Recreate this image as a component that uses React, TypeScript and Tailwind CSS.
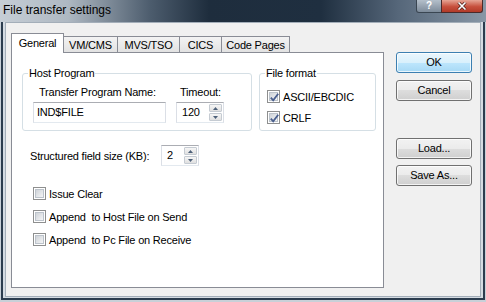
import React from 'react'

const TABS = [
  { label: 'General', w: 'w-[53px]' },
  { label: 'VM/CMS', w: 'w-[55px]' },
  { label: 'MVS/TSO', w: 'w-[63px]' },
  { label: 'CICS', w: 'w-[43px]' },
  { label: 'Code Pages', w: 'w-[69px]' },
]

function CheckBox({ checked }: { checked?: boolean }) {
  return (
    <span className="relative flex h-[13px] w-[13px] shrink-0 items-center justify-center border border-[#8e8f8f] bg-white">
      <span className="h-[9px] w-[9px] border border-[#bcc3cb] bg-[linear-gradient(135deg,#cfd3d8,#f4f5f6)]" />
      {checked && (
        <svg className="absolute left-[1px] top-[1px]" width="11" height="11" viewBox="0 0 11 11">
          <path d="M1.8 5.6 L4.2 8.3 L9.2 1.8" fill="none" stroke="#4a5f8e" strokeWidth="1.8" />
        </svg>
      )}
    </span>
  )
}

function CheckRow({ label, checked, h }: { label: string; checked?: boolean; h: string }) {
  return (
    <div className={`flex ${h} items-center gap-[3px]`}>
      <CheckBox checked={checked} />
      <span className="whitespace-pre leading-[14px]">{label}</span>
    </div>
  )
}

function Arrow({ up }: { up?: boolean }) {
  return (
    <svg width="5" height="3" viewBox="0 0 5 3">
      <path d={up ? 'M0 3 L2.5 0 L5 3 Z' : 'M0 0 L2.5 3 L5 0 Z'} fill="#4d6079" />
    </svg>
  )
}

function Spin({ value, w }: { value: string; w: string }) {
  return (
    <div className={`flex h-[21px] ${w} border border-[#abadb3] border-x-[#dbdfe6] border-b-[#e3e9ef] bg-white`}>
      <span className="flex-1 pl-[5px] leading-[19px]">{value}</span>
      <div className="flex w-[14px] flex-col py-[1px] pr-[1px]">
        <span className="flex h-[8px] items-center justify-center rounded-[1px] border border-[#c5cbd2] bg-[linear-gradient(#f6f6f6,#e0e0e0)]">
          <Arrow up />
        </span>
        <span className="mt-[1px] flex h-[8px] items-center justify-center rounded-[1px] border border-[#c5cbd2] bg-[linear-gradient(#f6f6f6,#e0e0e0)]">
          <Arrow />
        </span>
      </div>
    </div>
  )
}

function Button({ label, primary, className = '' }: { label: string; primary?: boolean; className?: string }) {
  const look = primary
    ? 'border-[#3c7fb1] bg-[linear-gradient(to_bottom,#eaf6fd_0%,#d9f0fc_50%,#bee6fd_50%,#a7d9f5_100%)]'
    : 'border-[#707070] bg-[linear-gradient(to_bottom,#f2f2f2_0%,#ebebeb_50%,#dddddd_50%,#cfcfcf_100%)]'
  return (
    <div
      className={`flex h-[21px] w-[76px] items-center justify-center rounded-[3px] border shadow-[inset_0_0_0_1px_rgba(255,255,255,0.75)] ${look} ${className}`}
    >
      {label}
    </div>
  )
}

function GroupBox({ title, w, children }: { title: string; w: string; children: React.ReactNode }) {
  return (
    <div className={`relative h-[58px] ${w} rounded-[3px] border border-[#d5dfe5]`}>
      <span className="absolute -top-[8px] left-[5px] bg-white px-[1px] leading-[14px]">{title}</span>
      {children}
    </div>
  )
}

export default function App() {
  return (
    <div className="flex h-[302px] w-[486px] flex-col bg-[#c8d0d8] font-['Liberation_Sans',Arial,sans-serif] text-[11px] tracking-[-0.2px] text-black">
      {/* Title bar */}
      <div className="flex h-[22px] shrink-0 items-start bg-[linear-gradient(90deg,#c6ced6_0%,#aeb8c2_14%,#4c5c6d_31%,#1e2d3d_43%,#1f2f40_66%,#56677a_82%,#8897a6_100%)]">
        <span className="pl-[3px] pt-[3px] text-[12px] leading-[14px] tracking-normal">File transfer settings</span>
        <div className="ml-auto mr-[3px] flex">
          <div className="flex h-[13px] w-[26px] items-center justify-center rounded-bl-[3px] border border-t-0 border-[#3a4652] bg-[linear-gradient(#b4bfca,#7d8b9a)] text-[10px] font-bold leading-none text-white">
            ?
          </div>
          <div className="-ml-px flex h-[13px] w-[42px] items-center justify-center rounded-br-[3px] border border-t-0 border-[#4a2a2a] bg-[linear-gradient(#e6a595,#c7503d_55%,#b13a28)]">
            <svg width="10" height="8" viewBox="0 0 10 8">
              <path d="M1.5 0.5 L8.5 7.5 M8.5 0.5 L1.5 7.5" stroke="#4a1a14" strokeWidth="3" />
              <path d="M1.5 0.5 L8.5 7.5 M8.5 0.5 L1.5 7.5" stroke="#ffffff" strokeWidth="1.6" />
            </svg>
          </div>
        </div>
      </div>

      {/* Frame */}
      <div className="flex flex-1 flex-col px-[1px] pb-[2px]">
        <div className="flex flex-1 flex-col border-x-2 border-b-2 border-[#2b3c4e] bg-[#d4dbe2] px-[2px] pb-[1px]">
          <div className="flex flex-1 items-start border border-[#a3aeb9] bg-[#f0f0f0]">
            {/* Left: tabs */}
            <div className="ml-[5px] mt-[10px] flex w-[373px] flex-col">
              <div className="flex h-[19px] items-end">
                {TABS.map((t, i) =>
                  i === 0 ? (
                    <div
                      key={t.label}
                      className={`relative z-10 -mb-px flex h-[20px] ${t.w} items-center justify-center border border-b-0 border-[#898c95] bg-white`}
                    >
                      {t.label}
                    </div>
                  ) : (
                    <div
                      key={t.label}
                      className={`-ml-px flex h-[16px] ${t.w} items-center justify-center border border-b-0 border-[#898c95] bg-[linear-gradient(#f3f3f3,#e2e2e2)] pt-[1px]`}
                    >
                      {t.label}
                    </div>
                  )
                )}
              </div>
              <div className="h-[236px] border border-[#898c95] bg-white pl-[10px] pt-[20px]">
                <div className="flex gap-[7px]">
                  <GroupBox title="Host Program" w="w-[230px]">
                    <div className="flex pl-[10px] pt-[11px]">
                      <div className="flex w-[133px] flex-col">
                        <span className="pl-[6px] leading-[14px]">Transfer Program Name:</span>
                        <div className="mt-[3px] h-[21px] border border-[#abadb3] border-x-[#dbdfe6] border-b-[#e3e9ef] bg-white pl-[3px] leading-[19px]">
                          IND$FILE
                        </div>
                      </div>
                      <div className="ml-[10px] flex flex-col">
                        <span className="pl-[4px] leading-[14px]">Timeout:</span>
                        <div className="mt-[3px]">
                          <Spin value="120" w="w-[48px]" />
                        </div>
                      </div>
                    </div>
                  </GroupBox>
                  <GroupBox title="File format" w="w-[117px]">
                    <div className="flex flex-col pl-[7px] pt-[12px]">
                      <CheckRow label="ASCII/EBCDIC" checked h="h-[21px]" />
                      <CheckRow label="CRLF" checked h="h-[21px]" />
                    </div>
                  </GroupBox>
                </div>

                <div className="mt-[14px] flex h-[21px] items-center pl-[8px]">
                  <span className="w-[131px] leading-[14px]">Structured field size (KB):</span>
                  <Spin value="2" w="w-[38px]" />
                </div>

                <div className="mt-[16px] flex flex-col pl-[11px]">
                  <CheckRow label="Issue Clear" h="h-[23px]" />
                  <CheckRow label="Append  to Host File on Send" h="h-[23px]" />
                  <CheckRow label="Append  to Pc File on Receive" h="h-[23px]" />
                </div>
              </div>
            </div>

            {/* Right: buttons */}
            <div className="ml-[12px] flex flex-col pt-[29px]">
              <Button label="OK" primary />
              <Button label="Cancel" className="mt-[7px]" />
              <Button label="Load..." className="mt-[37px]" />
              <Button label="Save As..." className="mt-[6px]" />
            </div>
          </div>
        </div>
      </div>
    </div>
  )
}
